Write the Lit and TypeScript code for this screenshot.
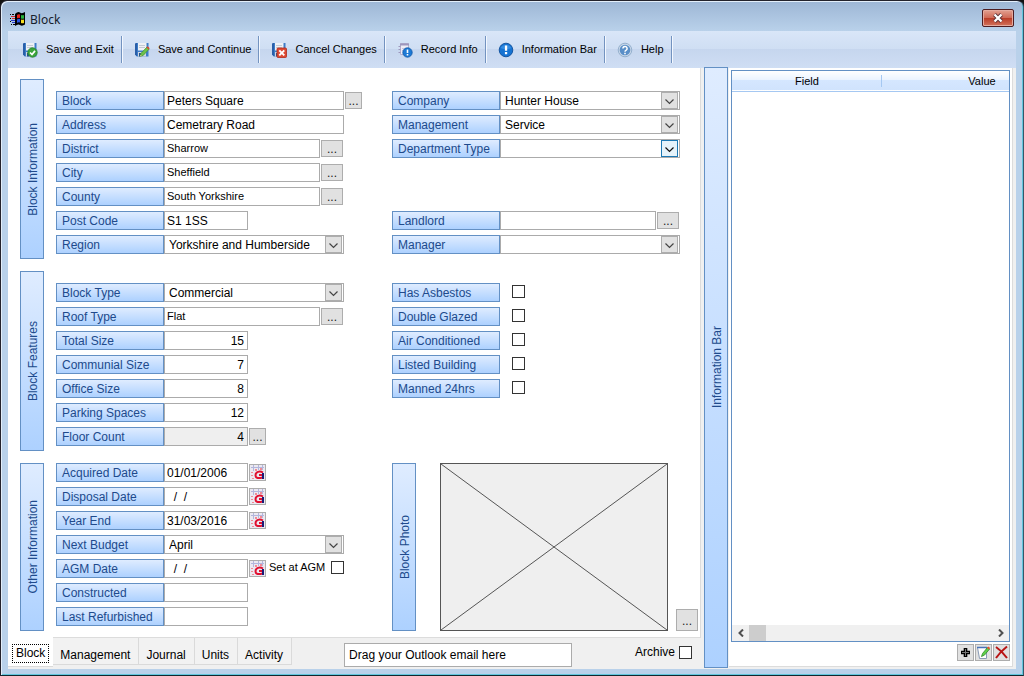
import { LitElement, html, css, svg, nothing, TemplateResult } from "lit";
import { customElement, property } from "lit/decorators.js";
import { classMap } from "lit/directives/class-map.js";

type Kind = "text" | "lookup" | "select" | "date" | "check";

interface Field {
  id: string;
  label: string;
  kind: Kind;
  value?: string;
  size?: "full" | "wide" | "short";
  lookup?: boolean;
  numeric?: boolean;
  readonly?: boolean;
  hot?: boolean;
  row?: 6 | 7;
  extra?: string;
}

const blockLeft: Field[] = [
  { id: "block", label: "Block", kind: "text", value: "Peters Square", size: "full", lookup: true },
  { id: "address", label: "Address", kind: "text", value: "Cemetrary Road", size: "full" },
  { id: "district", label: "District", kind: "lookup", value: "Sharrow" },
  { id: "city", label: "City", kind: "lookup", value: "Sheffield" },
  { id: "county", label: "County", kind: "lookup", value: "South Yorkshire" },
  { id: "postcode", label: "Post Code", kind: "text", value: "S1 1SS", size: "short" },
  { id: "region", label: "Region", kind: "select", value: "Yorkshire and Humberside" },
];

const blockRight: Field[] = [
  { id: "company", label: "Company", kind: "select", value: "Hunter House" },
  { id: "management", label: "Management", kind: "select", value: "Service" },
  { id: "department", label: "Department Type", kind: "select", value: "", hot: true },
  { id: "landlord", label: "Landlord", kind: "lookup", value: "", row: 6 },
  { id: "manager", label: "Manager", kind: "select", value: "", row: 7 },
];

const featuresLeft: Field[] = [
  { id: "blocktype", label: "Block Type", kind: "select", value: "Commercial" },
  { id: "rooftype", label: "Roof Type", kind: "lookup", value: "Flat" },
  { id: "total", label: "Total Size", kind: "text", value: "15", size: "short", numeric: true },
  { id: "communal", label: "Communial Size", kind: "text", value: "7", size: "short", numeric: true },
  { id: "office", label: "Office Size", kind: "text", value: "8", size: "short", numeric: true },
  { id: "parking", label: "Parking Spaces", kind: "text", value: "12", size: "short", numeric: true },
  { id: "floors", label: "Floor Count", kind: "text", value: "4", size: "short", numeric: true, readonly: true, lookup: true },
];

const featuresRight: Field[] = [
  { id: "asbestos", label: "Has Asbestos", kind: "check" },
  { id: "glazed", label: "Double Glazed", kind: "check" },
  { id: "aircon", label: "Air Conditioned", kind: "check" },
  { id: "listed", label: "Listed Building", kind: "check" },
  { id: "manned", label: "Manned 24hrs", kind: "check" },
];

const otherLeft: Field[] = [
  { id: "acquired", label: "Acquired Date", kind: "date", value: "01/01/2006" },
  { id: "disposal", label: "Disposal Date", kind: "date", value: "  /  /" },
  { id: "yearend", label: "Year End", kind: "date", value: "31/03/2016" },
  { id: "budget", label: "Next Budget", kind: "select", value: "April" },
  { id: "agm", label: "AGM Date", kind: "date", value: "  /  /", extra: "Set at AGM" },
  { id: "constructed", label: "Constructed", kind: "text", value: "", size: "short" },
  { id: "refurbished", label: "Last Refurbished", kind: "text", value: "", size: "short" },
];

const floppy = svg`
  <path d="M1 2l1-1h12.500v13.500H3l-2-2z" fill="#3c7cc8"/>
  <path d="M1 2v10.500l2 2V1H2z" fill="#2a5fa8"/>
  <path d="M4 1h8.500v7.500H4z" fill="#eef1f5"/>
  <path d="M5 3.500h6M5 5.500h6" stroke="#c3cad4"/>
  <path d="M4 10h8v4.500H4z" fill="#cfd6e0"/>
  <path d="M5 11h2v3.500H5z" fill="#24508c"/>`;

const icons: Record<string, TemplateResult> = {
  exit: html`<svg class="icon" viewBox="0 0 16 16" aria-hidden="true">${floppy}
    <circle cx="10.5" cy="10.5" r="4.7" fill="#3aa53a" stroke="#23812b" stroke-width=".8"/>
    <path d="M8 10.5l2 2 3-3.6" fill="none" stroke="#fff" stroke-width="1.7"/></svg>`,
  cont: html`<svg class="icon" viewBox="0 0 16 16" aria-hidden="true">${floppy}
    <path d="M6 14.500l1-3.200 6-6.300 2.200 2-6 6.400z" fill="#6cc24a" stroke="#3f8f2c" stroke-width=".7"/>
    <path d="M12.500 5.500l1.200-1.200 2 1.900-1.200 1.300z" fill="#d9482f"/>
    <path d="M6 14.500l.6-1.800 1.200 1.200z" fill="#f2d9a0"/></svg>`,
  cancel: html`<svg class="icon" viewBox="0 0 16 16" aria-hidden="true">${floppy}
    <rect x="6" y="6" width="9.500" height="9.500" rx="1" fill="#dd4a33" stroke="#b02a1c" stroke-width=".8"/>
    <path d="M8.300 8.300l5 5M13.300 8.300l-5 5" stroke="#fff" stroke-width="1.900"/></svg>`,
  record: html`<svg class="icon" viewBox="0 0 16 16" aria-hidden="true">
    <path d="M3.500 1.500h8v11h-8z" fill="#efedf6" stroke="#b5b0cc"/>
    <path d="M3 2.500h9" stroke="#9d96bd" stroke-width="2"/>
    <path d="M1.500 4.500h2M1.500 7.500h2M1.500 10.500h2" stroke="#9d96bd"/>
    <path d="M5 6.500h5M5 8.500h3" stroke="#c9c5dc"/>
    <circle cx="10.500" cy="10.500" r="4.700" fill="#1d7ad6" stroke="#0f57a6" stroke-width=".8"/>
    <path d="M9.700 7.500h1.600v3.500H9.700zM9.700 12h1.600v1.500H9.700z" fill="#fff"/></svg>`,
  info: html`<svg class="icon" viewBox="0 0 16 16" aria-hidden="true">
    <circle cx="8" cy="8" r="6.800" fill="#1673d2" stroke="#0d4e9b" stroke-width=".9"/>
    <path d="M2.500 6a6 5 0 0 1 11 0 9 5 0 0 1-11 0z" fill="#4a9ceb" opacity=".6"/>
    <path d="M6.900 3.500h2.300v5.200H6.900zM6.900 10h2.300v2.200H6.900z" fill="#fff"/></svg>`,
  help: html`<svg class="icon" viewBox="0 0 16 16" aria-hidden="true">
    <circle cx="8" cy="8" r="6.800" fill="#c7d6e8" stroke="#8fabc9" stroke-width=".9"/>
    <circle cx="8" cy="8" r="5.300" fill="#5a8fc8"/>
    <path d="M5.900 6.500a2.100 2 0 1 1 3.300 1.600Q8 8.800 8 9.800" fill="none" stroke="#fff" stroke-width="1.500"/>
    <path d="M7.200 10.700h1.600v1.500H7.200z" fill="#fff"/></svg>`,
};

const calendarIcon = html`<svg width="15" height="15" viewBox="0 0 15 15" aria-hidden="true">
  <path d="M0 0h15v15H0z" fill="#ebe9f1"/>
  <path d="M1 2.500h13M3.500 0v6M8.500 0v5M12.500 0v5" stroke="#b3b6dc"/>
  <path d="M5 4h2v2H5zM10 3h2v2h-2zM1 7h2v1H1zM1 10h2v1H1zM2 13h2v1H2z" fill="#f08a94"/>
  <path d="M13 7.500C9.500 5.500 5.500 7 5.500 10.200s3.500 3.300 7 2.300" fill="none" stroke="#e01030" stroke-width="2"/>
  <path d="M9 9h3v2H9z" fill="#e01030"/>
  <path d="M12 8h2v6h-2z" fill="#1b1b78"/></svg>`;

const chevron = html`<svg width="15" height="15" viewBox="0 0 15 15" aria-hidden="true">
  <path d="M3.500 6.500l4 4 4-4" fill="none" stroke="currentColor" stroke-width="1.200"/></svg>`;

const shared = css`
  * { box-sizing: border-box; }
  button, input, select { font: inherit; color: inherit; margin: 0; border-radius: 0; }
  .dots {
    background: #e1e1e1; border: 1px solid #adadad; padding: 2px 0 0;
    width: 22px; height: 17px; line-height: 15px; color: #222;
    display: flex; align-items: center; justify-content: center;
  }
  .tick {
    appearance: none; width: 13px; height: 13px; flex: none;
    border: 1px solid #333; background: #fff;
  }
  .tick:checked { background: #333; box-shadow: inset 0 0 0 2px #fff; }
`;

@customElement("block-field")
class BlockField extends LitElement {
  @property({ attribute: false }) field!: Field;

  static styles = [shared, css`
    :host { display: flex; height: 19px; gap: 1px; }
    .pair { display: flex; }
    .label {
      width: 108px; flex: none; height: 19px; padding: 1px 0 0 5px; line-height: 17px;
      color: #204a8c; border: 1px solid #6390c4; white-space: nowrap;
      background: linear-gradient(#dfecff, #add1ff);
    }
    .box {
      height: 19px; border: 1px solid #ababab; background: #fff; color: #000;
      padding: 0 2px; outline: none;
    }
    .full { width: 180px; }
    .wide { width: 156px; }
    .short { width: 84px; }
    .small { font-size: 11px; padding-bottom: 2px; }
    .numeric { text-align: right; padding-right: 3px; }
    .readonly { background: #efefef; }
    .combo { display: grid; width: 180px; }
    .combo > * { grid-area: 1 / 1; }
    .choice { appearance: none; width: 100%; padding: 1px 20px 0 4px; }
    .arrow {
      width: 17px; height: 17px; margin: 1px 2px 0 0; justify-self: end; pointer-events: none;
      background: #e1e1e1; border: 1px solid #adadad; color: #444; display: flex;
    }
    .hot { background: #e5f3fb; border-color: #1c78b4; color: #111; }
    .side { margin-top: 1px; }
    .square { width: 17px; }
    .calendar {
      width: 17px; height: 17px; padding: 0; margin-top: 1px; display: flex;
      border: 1px solid #adadad; background: #e1e1e1;
    }
    .flag { margin: 2px 0 0 12px; }
    .extra { display: flex; gap: 6px; padding-left: 2px; font-size: 11px; line-height: 17px; white-space: nowrap; }
    .extra .tick { margin-top: 2px; }
  `];

  private dots(square: boolean) {
    return html`<button type="button" class=${classMap({ dots: true, side: true, square })}
      aria-label="Look up ${this.field.label}">...</button>`;
  }

  private control(f: Field) {
    if (f.kind === "check") return html`<input class="tick flag" type="checkbox" id=${f.id}>`;
    if (f.kind === "select") {
      return html`<span class="combo">
        <select class="box choice" id=${f.id}><option>${f.value}</option></select>
        <span class=${classMap({ arrow: true, hot: !!f.hot })}>${chevron}</span>
      </span>`;
    }
    const size = f.kind === "lookup" ? "wide" : f.kind === "date" ? "short" : f.size!;
    return html`<input type="text" id=${f.id} .value=${f.value ?? ""} ?readonly=${f.readonly}
      class=${classMap({
        box: true, [size]: true, small: f.kind === "lookup",
        numeric: !!f.numeric, readonly: !!f.readonly,
      })}>`;
  }

  render() {
    const f = this.field;
    return html`
      <div class="pair"><label class="label" for=${f.id}>${f.label}</label>${this.control(f)}</div>
      ${f.kind === "lookup" ? this.dots(false) : f.lookup ? this.dots(true) : nothing}
      ${f.kind === "date"
        ? html`<button type="button" class="calendar" aria-label="Pick ${f.label}">${calendarIcon}</button>`
        : nothing}
      ${f.extra ? html`<label class="extra">${f.extra}<input class="tick" type="checkbox"></label>` : nothing}`;
  }
}

@customElement("app-root")
class AppRoot extends LitElement {
  static styles = [shared, css`
    :host {
      display: block; min-height: 100vh; background: #111;
      font: 12px/17px "Liberation Sans", Arial, sans-serif; color: #000;
    }
    .window {
      min-height: 100vh; display: flex; flex-direction: column;
      padding: 0 7px 6px; border: 1px solid #23222c; border-right-color: #35566a; border-bottom-color: #10282f;
      border-radius: 7px 7px 0 0;
      background: linear-gradient(#9db6d5, #b9d1ea 30px, #b9d1ea);
      box-shadow: inset 1px 1px 0 #e3eefa, inset -1px -1px 0 #62c6dc;
    }
    .titlebar { height: 30px; display: flex; align-items: center; gap: 4px; padding: 6px 2px 0 2px; }
    .caption { flex: 1; margin: 0; font: 12px/17px "Noto Sans", sans-serif; color: #16202c; }
    .close {
      width: 32px; height: 18px; padding: 0; display: flex; align-items: center; justify-content: center;
      border: 1px solid #4d1d22; border-radius: 2px; margin-bottom: 2px;
      background: linear-gradient(#e3a191, #cf6a57 48%, #b93a25 50%, #d2735c);
      box-shadow: inset 0 0 0 1px #e5aa9e;
    }
    .toolbar {
      height: 37px; display: flex; padding: 5px 0 5px 2px; font-size: 11px;
      background: linear-gradient(#d9e6f8, #cfdef3 50%, #c6d6ee 50%, #cfdef4);
    }
    .tool {
      display: flex; align-items: center; gap: 8px; padding: 0 7px 0 12px; height: 27px;
      border: 0; border-right: 1px solid #7393c0; box-shadow: 1px 0 0 #f3f8ff; background: none; white-space: nowrap;
    }
    .icon { width: 16px; height: 16px; flex: none; margin-top: 1px; }
    .client { flex: 1; display: flex; background: #f0f0f0; }
    .main { flex: 1; min-width: 0; display: flex; flex-direction: column; }
    .page {
      flex: 1; background: #fff; margin: 0 3px 0 0; border-right: 1px solid #dcdcdc;
      border-bottom: 1px solid #dcdcdc; padding: 11px 2px 6px 12px;
      display: flex; flex-direction: column; gap: 12px;
    }
    .section { display: grid; grid-template-columns: 24px 324px 1fr; column-gap: 12px; min-height: 180px; }
    .last { min-height: 168px; }
    .strip {
      width: 24px; display: flex; align-items: center; justify-content: center; padding-left: 2px;
      border: 1px solid #6390c4; background: linear-gradient(#dfecff, #add1ff);
      color: #204a8c; margin: 0; font-weight: normal; font-size: 12px;
    }
    .turned { writing-mode: vertical-rl; transform: rotate(180deg); white-space: nowrap; }
    .rows { display: grid; grid-auto-rows: 19px; row-gap: 5px; align-content: start; padding-top: 12px; }
    .last .rows { padding-top: 0; }
    .row6 { grid-row: 6; }
    .row7 { grid-row: 7; }
    .media { display: flex; align-items: flex-end; }
    .media .strip { height: 100%; }
    .photo { width: 228px; height: 168px; margin: 0 8px 0 24px; background: #efefef; border: 1px solid #555; }
    .tall { height: 22px; }
    .footer { height: 31px; display: flex; }
    .tabs { display: flex; }
    .tab {
      height: 27px; padding: 9px 8px 0 7px; border: 0; border-right: 1px solid #dadada;
      border-bottom: 1px solid #dadada; background: #f2f2f2; display: flex; align-items: flex-start;
    }
    .current {
      height: 30px; margin-top: -1px; padding: 7px 4px 0; background: #fff; border-right: 0;
    }
    .focus { border: 1px dotted #000; padding: 0 3px; }
    .mail { width: 228px; height: 24px; border: 1px solid #ababab; background: #fff; padding: 0 4px; margin: 5px 0 0 52px; }
    .archive { margin: 6px 12px 0 auto; display: flex; gap: 4px; line-height: 17px; }
    .archive .tick { margin-top: 2px; }
    .bar { background: linear-gradient(#dfecff, #add1ff); margin: -1px 0 1px; }
    .panel {
      width: 284px; margin: 0 3px 2px 1px; padding: 2px; background: #fff;
      border-right: 1px solid #dcdcdc; border-bottom: 1px solid #dcdcdc;
      display: flex; flex-direction: column; gap: 2px;
    }
    .listing { flex: 1; border: 1px solid #6390c4; overflow: hidden; display: flex; flex-direction: column; }
    .grid { border-collapse: collapse; table-layout: fixed; width: 350px; }
    .head { height: 20px; background: linear-gradient(#fff, #eaf3ff 48%, #d5e7ff 50%, #d0e3fd); border-bottom: 1px solid #a5c8f2; }
    .cell { padding: 2px 0 0; font-weight: normal; width: 200px; font-size: 11px; }
    .first { width: 150px; background: linear-gradient(#a5c8f2, #a5c8f2) right center / 1px 12px no-repeat; }
    .scroll { margin-top: auto; height: 16px; background: #f0f0f0; display: flex; align-items: stretch; }
    .step { width: 17px; border: 0; padding: 0; background: none; display: flex; align-items: center; justify-content: center; }
    .thumb { width: 17px; background: #cdcdcd; margin-right: auto; }
    .actions { display: flex; justify-content: flex-end; gap: 1px; height: 20px; }
    .action { width: 17px; height: 17px; padding: 0; background: #e1e1e1; border: 1px solid #adadad; display: flex; }
  `];

  private rows(fields: Field[]) {
    return html`<div class="rows">${fields.map(
      (f) => html`<block-field class=${f.row ? `row${f.row}` : ""} .field=${f}></block-field>`)}</div>`;
  }

  private strip(text: string, bar = false) {
    return html`<h2 class=${classMap({ strip: true, bar })}><span class="turned">${text}</span></h2>`;
  }

  private tool(icon: string, text: string) {
    return html`<button type="button" class="tool">${icons[icon]}<span>${text}</span></button>`;
  }

  render() {
    return html`<div class="window">
      <header class="titlebar">
        <svg width="16" height="16" viewBox="0 0 16 16" aria-hidden="true">
          <path d="M5 3q3-3 5-1.500t5-.500v12.500q-3 2-5 .5t-5 1z" fill="#000"/>
          <path d="M7 4q1.500-1.200 3-.5v3.500q-1.500-.7-3 .5z" fill="#e8241c"/>
          <path d="M11 4q1.500.7 3 0v3.500q-1.500.7-3 0z" fill="#26b33a"/>
          <path d="M7 8.500q1.500-1.200 3-.5v3.500q-1.500-.7-3 .5z" fill="#2b55e0"/>
          <path d="M11 8.500q1.500.7 3 0V12q-1.500.7-3 0z" fill="#f5dc1f"/>
          <path d="M0 3.500h1M2 3.500h2M1 13.500h1M3 13.500h2M0 10.500h1M0 7.500h1" stroke="#000"/>
          <path d="M1 5.500h4M2 7.500h3" stroke="#d62a2a"/>
          <path d="M1 9.500h4M2 11.500h3" stroke="#2438c8"/>
        </svg>
        <h1 class="caption">Block</h1>
        <button type="button" class="close" aria-label="Close">
          <svg width="12" height="10" viewBox="0 0 12 10" aria-hidden="true">
            <path d="M2.500 1.500l7 7M9.500 1.500l-7 7" stroke="#5b3338" stroke-width="4"/>
            <path d="M2.500 1.500l7 7M9.500 1.500l-7 7" stroke="#fff" stroke-width="2.300"/>
          </svg>
        </button>
      </header>
      <nav class="toolbar">
        ${this.tool("exit", "Save and Exit")}${this.tool("cont", "Save and Continue")}
        ${this.tool("cancel", "Cancel Changes")}${this.tool("record", "Record Info")}
        ${this.tool("info", "Information Bar")}${this.tool("help", "Help")}
      </nav>
      <div class="client">
        <main class="main">
          <form class="page">
            <section class="section">${this.strip("Block Information")}${this.rows(blockLeft)}${this.rows(blockRight)}</section>
            <section class="section">${this.strip("Block Features")}${this.rows(featuresLeft)}${this.rows(featuresRight)}</section>
            <section class="section last">
              ${this.strip("Other Information")}${this.rows(otherLeft)}
              <div class="media">
                ${this.strip("Block Photo")}
                <svg class="photo" viewBox="0 0 226 166" preserveAspectRatio="none" role="img" aria-label="No photo">
                  <path d="M0 0L226 166M226 0L0 166" stroke="#555" stroke-width="1"/>
                </svg>
                <button type="button" class="dots tall" aria-label="Choose photo">...</button>
              </div>
            </section>
          </form>
          <footer class="footer">
            <div class="tabs" role="tablist">
              <button type="button" class="tab current" role="tab" aria-selected="true"><span class="focus">Block</span></button>
              ${["Management", "Journal", "Units", "Activity"].map(
                (t) => html`<button type="button" class="tab" role="tab">${t}</button>`)}
            </div>
            <input class="mail" type="text" aria-label="Outlook email" value="Drag your Outlook email here">
            <label class="archive">Archive<input class="tick" type="checkbox"></label>
          </footer>
        </main>
        ${this.strip("Information Bar", true)}
        <aside class="panel">
          <div class="listing">
            <table class="grid">
              <thead><tr class="head"><th class="cell first" scope="col">Field</th><th class="cell" scope="col">Value</th></tr></thead>
              <tbody></tbody>
            </table>
            <div class="scroll">
              <button type="button" class="step" aria-label="Scroll left">
                <svg width="8" height="8" viewBox="0 0 8 8"><path d="M6 .5L2.500 4 6 7.500" fill="none" stroke="#505050" stroke-width="2"/></svg>
              </button>
              <div class="thumb"></div>
              <button type="button" class="step" aria-label="Scroll right">
                <svg width="8" height="8" viewBox="0 0 8 8"><path d="M2 .5L5.500 4 2 7.500" fill="none" stroke="#505050" stroke-width="2"/></svg>
              </button>
            </div>
          </div>
          <div class="actions">
            <button type="button" class="action" aria-label="Add">
              <svg width="15" height="15" viewBox="0 0 15 15"><path d="M7.500 3v9M3 7.500h9" stroke="#000" stroke-width="3.600"/><path d="M7.500 4v7M4 7.500h7" stroke="#777" stroke-width="1"/></svg>
            </button>
            <button type="button" class="action" aria-label="Edit">
              <svg width="15" height="15" viewBox="0 0 15 15"><path d="M1.500 2.500h9v11h-7z" fill="#fff" stroke="#8a9bb5"/><path d="M1 2.500h10" stroke="#4a74b8" stroke-width="1.500"/><path d="M5.500 11.500l1-3 5-6 2 1.600-5 6z" fill="#5fd04a" stroke="#2f8a28" stroke-width=".8"/><path d="M11 3l1.200-1.600 2 1.500L13 4.600z" fill="#e5532f"/></svg>
            </button>
            <button type="button" class="action" aria-label="Delete">
              <svg width="15" height="15" viewBox="0 0 15 15"><path d="M2 2q6 4 11 11M13 1.500Q6 7 2 13" fill="none" stroke="#b81414" stroke-width="2"/></svg>
            </button>
          </div>
        </aside>
      </div>
    </div>`;
  }
}
